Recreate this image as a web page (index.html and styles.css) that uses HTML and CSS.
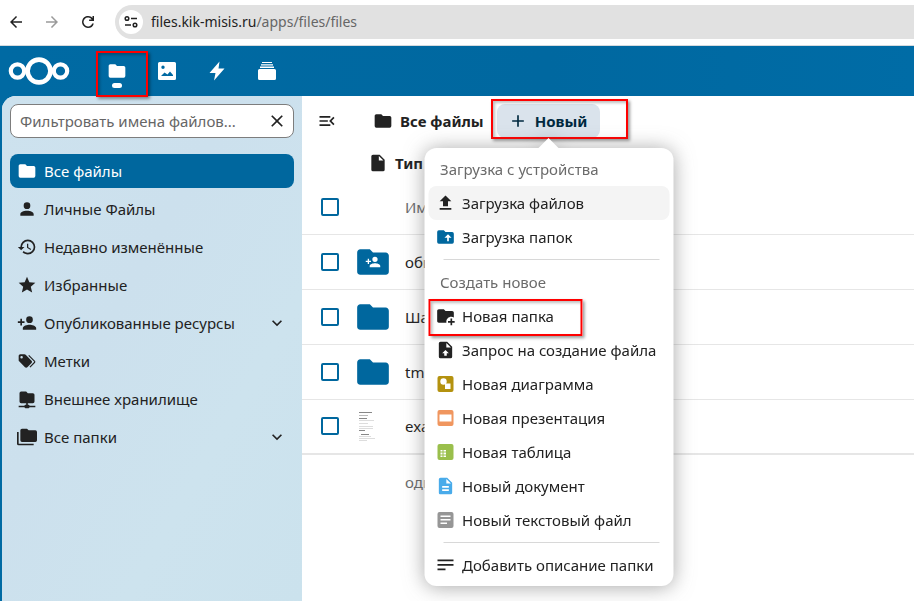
FILE: index.html
```html
<!DOCTYPE html>
<html lang="ru">
<head>
<meta charset="utf-8">
<title>Все файлы</title>
<link rel="stylesheet" href="styles.css">
</head>
<body>
<svg class="sprite" aria-hidden="true">
  <symbol id="folder" viewBox="0 0 24 24"><path d="M10,4H4C2.89,4 2,4.89 2,6V18A2,2 0 0,0 4,20H20A2,2 0 0,0 22,18V8C22,6.89 21.1,6 20,6H12L10,4Z"/></symbol>
  <symbol id="account-plus" viewBox="0 0 24 24"><path d="M15,14C12.33,14 7,15.33 7,18V20H23V18C23,15.33 17.67,14 15,14M6,10V7H4V10H1V12H4V15H6V12H9V10M15,12A4,4 0 0,0 19,8A4,4 0 0,0 15,4A4,4 0 0,0 11,8A4,4 0 0,0 15,12Z"/></symbol>
  <symbol id="chevron" viewBox="0 0 24 24"><path d="M7.41,8.58L12,13.17L16.59,8.58L18,10L12,16L6,10L7.41,8.58Z"/></symbol>
</svg>

<div class="browser">
  <button class="nav-btn" aria-label="Назад"><svg viewBox="0 0 24 24"><path d="M20,11H7.8L13.4,5.4L12,4L4,12L12,20L13.4,18.6L7.8,13H20V11Z"/></svg></button>
  <button class="nav-btn muted" aria-label="Вперёд"><svg viewBox="0 0 24 24"><path d="M4,11H16.2L10.6,5.4L12,4L20,12L12,20L10.6,18.6L16.2,13H4V11Z"/></svg></button>
  <button class="nav-btn" aria-label="Обновить"><svg viewBox="0 0 24 24"><path d="M12,20A8,8 0 1,1 17.7,6.35L18,6.65V4H20V10.5H13.5V8.5H16.9A6,6 0 1,0 17.65,14H19.75A8,8 0 0,1 12,20Z"/></svg></button>
  <div class="address">
    <button class="site-info" aria-label="Сведения о сайте"><svg class="outline" viewBox="0 0 18 18" stroke="currentColor" stroke-width="1.500"><circle cx="5" cy="5.500" r="1.800"/><path d="M9 5.500H15M3 12H9"/><circle cx="13" cy="12" r="1.800"/></svg></button>
    <span class="url">files.kik-misis.ru<span>/apps/files/files</span></span>
  </div>
</div>

<header class="topbar">
  <a class="logo" href="#" aria-label="Главная"><svg class="outline" viewBox="0 0 62 28" stroke="#fff"><circle cx="31" cy="14" r="11.4" stroke-width="4.6"/><circle cx="9.5" cy="14" r="6.7" stroke-width="4.2"/><circle cx="52.5" cy="14" r="6.7" stroke-width="4.2"/></svg></a>
  <nav class="apps">
    <a class="app current" href="#" aria-label="Файлы"><svg viewBox="0 0 24 24"><use href="#folder"/></svg><i class="mark mark-app"></i></a>
    <a class="app" href="#" aria-label="Фото"><svg viewBox="0 0 20 20"><path fill-rule="evenodd" d="M2.5 1H17.5Q19 1 19 2.500V17.500Q19 19 17.500 19H2.500Q1 19 1 17.500V2.500Q1 1 2.500 1ZM6 4.500A1.700 1.700 0 1 0 6 7.900A1.700 1.700 0 1 0 6 4.500ZM4 15H16V14L13 10.500L10.500 13.500L7.500 11.500Z"/></svg></a>
    <a class="app" href="#" aria-label="События"><svg viewBox="0 0 20 20"><path d="M12.500 0.500L2.500 12H8.500L7 19.500L17.500 7.500H11.500Z"/></svg></a>
    <a class="app" href="#" aria-label="Карточки"><svg viewBox="0 0 20 20"><path d="M5 1H15V2H5ZM4 3.200H16V4.400H4ZM3 5.600H17V7H3ZM2.500 8H17.500Q19 8 19 9.500V17.500Q19 19 17.500 19H2.500Q1 19 1 17.500V9.500Q1 8 2.500 8Z"/></svg></a>
  </nav>
</header>

<div class="content">
  <aside class="sidebar">
    <div class="search">
      <input type="text" aria-label="Фильтр" placeholder="Фильтровать имена файлов...">
      <button aria-label="Очистить"><svg viewBox="0 0 24 24"><path d="M19,6.41L17.59,5L12,10.59L6.41,5L5,6.41L10.59,12L5,17.59L6.41,19L12,13.41L17.59,19L19,17.59L13.41,12L19,6.41Z"/></svg></button>
    </div>
    <nav class="views">
      <a class="view active" href="#"><svg viewBox="0 0 24 24"><use href="#folder"/></svg><span>Все файлы</span></a>
      <a class="view" href="#"><svg viewBox="0 0 24 24"><path d="M12,4A4,4 0 0,1 16,8A4,4 0 0,1 12,12A4,4 0 0,1 8,8A4,4 0 0,1 12,4M12,14C16.42,14 20,15.79 20,18V20H4V18C4,15.79 7.58,14 12,14Z"/></svg><span>Личные Файлы</span></a>
      <a class="view" href="#"><svg viewBox="0 0 24 24"><path d="M13.5,8H12V13L16.28,15.54L17,14.33L13.5,12.25V8M13,3A9,9 0 0,0 4,12H1L4.96,16.03L9,12H6A7,7 0 0,1 13,5A7,7 0 0,1 20,12A7,7 0 0,1 13,19C11.07,19 9.32,18.21 8.06,16.94L6.64,18.36C8.27,20 10.5,21 13,21A9,9 0 0,0 22,12A9,9 0 0,0 13,3"/></svg><span>Недавно изменённые</span></a>
      <a class="view" href="#"><svg viewBox="0 0 24 24"><path d="M12,17.27L18.18,21L16.54,13.97L22,9.24L14.81,8.62L12,2L9.19,8.62L2,9.24L7.45,13.97L5.82,21L12,17.27Z"/></svg><span>Избранные</span></a>
      <a class="view" href="#"><svg viewBox="0 0 24 24"><use href="#account-plus"/></svg><span>Опубликованные ресурсы</span><svg viewBox="0 0 24 24"><use href="#chevron"/></svg></a>
      <a class="view" href="#"><svg viewBox="0 0 24 24"><path d="M5.5,9A1.5,1.5 0 0,0 7,7.5A1.5,1.5 0 0,0 5.5,6A1.5,1.5 0 0,0 4,7.5A1.5,1.5 0 0,0 5.5,9M17.41,11.58C17.77,11.94 18,12.44 18,13C18,13.55 17.78,14.05 17.41,14.41L12.41,19.41C12.05,19.77 11.55,20 11,20C10.45,20 9.95,19.78 9.58,19.41L2.59,12.42C2.22,12.05 2,11.55 2,11V6C2,4.89 2.89,4 4,4H9C9.55,4 10.05,4.22 10.41,4.58L17.41,11.58M13.54,5.71L14.54,4.71L21.41,11.58C21.78,11.94 22,12.45 22,13C22,13.55 21.78,14.05 21.42,14.41L16.04,19.79L15.04,18.79L20.75,13L13.54,5.71Z"/></svg><span>Метки</span></a>
      <a class="view" href="#"><svg viewBox="0 0 24 24"><path d="M3,15V5A2,2 0 0,1 5,3H11L13,5H19A2,2 0 0,1 21,7V15A2,2 0 0,1 19,17H13V19H14A1,1 0 0,1 15,20H22V22H15A1,1 0 0,1 14,23H10A1,1 0 0,1 9,22H2V20H9A1,1 0 0,1 10,19H11V17H5A2,2 0 0,1 3,15Z"/></svg><span>Внешнее хранилище</span></a>
      <a class="view" href="#"><svg viewBox="0 0 24 24"><path d="M22,4H14L12,2H6A2,2 0 0,0 4,4V16A2,2 0 0,0 6,18H22A2,2 0 0,0 24,16V6A2,2 0 0,0 22,4M2,6H0V11H0V20A2,2 0 0,0 2,22H20V20H2V6Z"/></svg><span>Все папки</span><svg viewBox="0 0 24 24"><use href="#chevron"/></svg></a>
    </nav>
  </aside>

  <main class="main">
    <div class="toolbar">
      <button class="toggle" aria-label="Закрыть навигацию"><svg viewBox="0 0 24 24"><path d="M21,15.61L19.59,17L14.58,12L19.59,7L21,8.39L17.44,12L21,15.61M3,6H16V8H3V6M3,13V11H13V13H3M3,18V16H16V18H3Z"/></svg></button>
      <a class="crumb" href="#"><svg viewBox="0 0 24 24"><use href="#folder"/></svg>Все файлы</a>
      <div class="new">
        <button class="new-btn"><svg viewBox="0 0 24 24"><path d="M19,13H13V19H11V13H5V11H11V5H13V11H19V13Z"/></svg>Новый</button>
        <i class="mark mark-new"></i>
        <div class="menu">
          <h2>Загрузка с устройства</h2>
          <button class="item hover"><svg viewBox="0 0 24 24"><path d="M9,16V10H5L12,3L19,10H15V16H9M5,20V18H19V20H5Z"/></svg>Загрузка файлов</button>
          <button class="item"><svg class="blue" viewBox="0 0 24 24"><path d="M20,6A2,2 0 0,1 22,8V18A2,2 0 0,1 20,20H4A2,2 0 0,1 2,18V6A2,2 0 0,1 4,4H10L12,6H20M10.75,13H14V17H16V13H19.25L15,8.75"/></svg>Загрузка папок</button>
          <hr>
          <h2>Создать новое</h2>
          <button class="item"><svg viewBox="0 0 24 24"><path d="M13 19C13 19.34 13.04 19.67 13.09 20H4C2.9 20 2 19.11 2 18V6C2 4.89 2.89 4 4 4H10L12 6H20C21.1 6 22 6.89 22 8V13.81C21.12 13.3 20.1 13 19 13C15.69 13 13 15.69 13 19M20 18V15H18V18H15V20H18V23H20V20H23V18H20Z"/></svg>Новая папка<i class="mark mark-item"></i></button>
          <button class="item"><svg viewBox="0 0 24 24"><path fill-rule="evenodd" d="M14,2H6C4.89,2 4,2.89 4,4V20A2,2 0 0,0 6,22H18A2,2 0 0,0 20,20V8L14,2M13,9V3.5L18.5,9H13M12,12L16,16H13.500V19H10.500V16H8L12,12Z"/></svg>Запрос на создание файла</button>
          <button class="item"><svg viewBox="0 0 20 20"><rect x="2" y="2" width="16" height="16" rx="2" fill="#b4920f"/><circle cx="8" cy="7.500" r="3.200" fill="#fff"/><rect x="9.500" y="9.500" width="5.500" height="5.500" fill="#fff"/></svg>Новая диаграмма</button>
          <button class="item"><svg viewBox="0 0 20 20"><rect x="2" y="2" width="16" height="16" rx="2" fill="#f0965f"/><rect x="4" y="6.500" width="12" height="7" fill="#fff"/></svg>Новая презентация</button>
          <button class="item"><svg viewBox="0 0 20 20"><rect x="2" y="2" width="16" height="16" rx="2" fill="#9abf4c"/><path fill="#fff" d="M5 8H7V9.500H5ZM8 8H10.500V9.500H8ZM5 10.500H7V12.500H5ZM8 10.500H10.500V12.500H8ZM5 13.500H7V15H5ZM8 13.500H10.500V15H8Z"/></svg>Новая таблица</button>
          <button class="item"><svg viewBox="0 0 24 24"><path fill="#49abea" d="M13,9H18.5L13,3.5V9M6,2H14L20,8V20A2,2 0 0,1 18,22H6C4.89,22 4,21.1 4,20V4C4,2.89 4.89,2 6,2M16,18V16H8V18H16M16,14V12H8V14H16Z"/></svg>Новый документ</button>
          <button class="item"><svg viewBox="0 0 20 20"><rect x="2" y="2" width="16" height="16" rx="2" fill="#969696"/><path fill="#fff" d="M5 5.500H15V7H5ZM5 9H15V10.500H5ZM5 12.500H11.500V14H5Z"/></svg>Новый текстовый файл</button>
          <hr>
          <button class="item"><svg viewBox="0 0 20 20"><path d="M2 4.500H18V6.200H2ZM2 9H18V10.700H2ZM2 13.500H10V15.200H2Z"/></svg>Добавить описание папки</button>
        </div>
      </div>
    </div>
    <button class="filter"><svg viewBox="0 0 24 24"><path fill-rule="evenodd" d="M13,9V3.5L18.5,9M6,2C4.89,2 4,2.89 4,4V20A2,2 0 0,0 6,22H18A2,2 0 0,0 20,20V8L14,2H6Z"/></svg>Тип</button>
    <table class="files">
      <thead>
        <tr><th class="check"><input type="checkbox" aria-label="Выбрать все"></th><th class="pic"></th><th>Имя</th></tr>
      </thead>
      <tbody>
        <tr><td class="check"><input type="checkbox" aria-label="Выбрать общая"></td><td class="pic"><svg class="blue" viewBox="0 0 24 24"><use href="#folder"/><use class="on-folder" href="#account-plus" x="7" y="7" width="10" height="10"/></svg></td><td>общая</td></tr>
        <tr><td class="check"><input type="checkbox" aria-label="Выбрать Шаблоны"></td><td class="pic"><svg class="blue" viewBox="0 0 24 24"><use href="#folder"/></svg></td><td>Шаблоны</td></tr>
        <tr><td class="check"><input type="checkbox" aria-label="Выбрать tmp"></td><td class="pic"><svg class="blue" viewBox="0 0 24 24"><use href="#folder"/></svg></td><td>tmp</td></tr>
        <tr><td class="check"><input type="checkbox" aria-label="Выбрать example"></td><td class="pic"><svg class="outline" viewBox="0 0 38 38"><path stroke="#888" d="M5 5.500H18M5 11.500H13M5 23.500H11M7 27.500H15"/><path stroke="#bbb" d="M5 8.500H14"/><path stroke="#ddd" d="M5 13.500H20M5 16.500H14M5 19.500H19M5 21.500H19M5 29.500H17M5 31.500H21M5 33.500H13"/></svg></td><td>example</td></tr>
      </tbody>
      <tfoot>
        <tr><td class="check"></td><td class="pic"></td><td>один</td></tr>
      </tfoot>
    </table>
  </main>
</div>
</body>
</html>
```
FILE: styles.css
```css
* { box-sizing: border-box; }
html, body { height: 100%; }
body {
  margin: 0;
  display: flex;
  flex-direction: column;
  overflow: hidden;
  background: #006aa3;
  color: #222;
  font: 15px/24px "Noto Sans", sans-serif;
}
button, input { font: inherit; color: inherit; margin: 0; }
button { border: 0; padding: 0; background: none; }
a { color: inherit; text-decoration: none; }
svg { width: 20px; height: 20px; flex: none; fill: currentColor; }
svg.outline { fill: none; }
.sprite { position: absolute; width: 0; height: 0; }
.blue { color: #00679e; }

.browser {
  display: flex;
  align-items: center;
  height: 46px;
  flex: none;
  padding: 0 0 2px 6px;
  gap: 16px;
  background: #fff;
  border-bottom: 1px solid #d5dade;
}
.nav-btn { display: flex; width: 20px; justify-content: center; }
.nav-btn svg { width: 18px; height: 18px; }
.muted { color: #9a9a9a; }
.address {
  flex: 1;
  display: flex;
  align-items: center;
  gap: 8px;
  height: 34px;
  margin-left: 1px;
  padding-left: 4px;
  border-radius: 17px 0 0 17px;
  background: #e1e1e1;
}
.site-info {
  display: flex;
  align-items: center;
  justify-content: center;
  width: 24px;
  height: 24px;
  border-radius: 50%;
  background: #fff;
}
.site-info svg { width: 18px; height: 18px; }
.url { color: #222; font-size: 14px; }
.url span { color: #666; }

.topbar {
  display: flex;
  align-items: center;
  flex: none;
  height: 50px;
  padding-left: 8px;
  background: linear-gradient(90deg, #006aa3, #0068a0 60%, #006ca6);
}
.logo { display: flex; margin-right: 22px; }
.logo svg { width: 62px; height: 28px; }
.apps { display: flex; color: #fff; }
.app {
  position: relative;
  display: flex;
  align-items: center;
  justify-content: center;
  width: 50px;
  height: 50px;
}
.current::after {
  content: "";
  position: absolute;
  left: 20px;
  bottom: 8px;
  width: 10px;
  height: 5px;
  border-radius: 3px;
  background: #fff;
}

.content {
  flex: 1;
  display: flex;
  min-height: 0;
  margin-left: 2px;
  border-radius: 14px 0 0 0;
  overflow: hidden;
  background: #fff;
}
.sidebar {
  width: 300px;
  flex: none;
  padding: 8px;
  background: linear-gradient(120deg, #cde2ee, #cce0ed 40%, #cde3ee 70%, #cbe2ed);
}
.search {
  display: flex;
  align-items: center;
  height: 34px;
  padding: 0 6px 0 9px;
  border: 1px solid #7d7d7d;
  border-radius: 8px;
  background: #fff;
}
.search input {
  flex: 1;
  min-width: 0;
  padding: 0;
  border: 0;
  outline: 0;
  background: none;
}
.search input::placeholder { color: #666; opacity: 1; }
.search button { display: flex; }
.views { display: flex; flex-direction: column; gap: 4px; margin-top: 16px; }
.view {
  display: flex;
  align-items: center;
  gap: 7px;
  height: 34px;
  padding: 0 7px;
  border-radius: 8px;
}
.view span { flex: 1; }
.active { background: #00679e; color: #fff; }

.main { flex: 1; min-width: 0; padding-top: 8px; }
.toolbar { display: flex; align-items: center; height: 34px; padding-left: 8px; }
.toggle { display: flex; width: 34px; justify-content: center; }
.toggle svg { width: 20px; height: 20px; }
.crumb {
  display: flex;
  align-items: center;
  gap: 7px;
  padding: 0 13px 0 29px;
  font-weight: 700;
}
.new { position: relative; }
.new-btn {
  display: flex;
  align-items: center;
  gap: 7px;
  height: 34px;
  padding: 0 13px 0 11px;
  border-radius: 8px;
  background: #dae3ec;
  color: #00293f;
  font-weight: 700;
}
.menu {
  position: absolute;
  z-index: 2;
  top: 44px;
  left: 50%;
  width: 249px;
  padding: 4px;
  transform: translateX(-50%);
  border-radius: 12px;
  background: #fff;
  filter: drop-shadow(0 1px 10px rgba(77, 77, 77, 0.5));
}
.menu::before {
  content: "";
  position: absolute;
  left: 50%;
  bottom: 100%;
  margin-left: -10px;
  border: 10px solid transparent;
  border-top: 0;
  border-bottom-color: #fff;
}
.menu h2 {
  margin: 0;
  padding: 0 12px;
  font-size: 15px;
  font-weight: 400;
  line-height: 34px;
  color: #6b6b6b;
}
.menu hr {
  height: 1px;
  margin: 5px 10px 5px 15px;
  border: 0;
  background: #d8d8d8;
}
.item {
  position: relative;
  display: flex;
  align-items: center;
  gap: 7px;
  width: 100%;
  height: 34px;
  padding: 0 7px;
  border-radius: 8px;
  white-space: nowrap;
}
.hover { background: #f4f4f4; }

.filter {
  display: flex;
  align-items: center;
  gap: 7px;
  height: 34px;
  margin: 8px 0 0 66px;
  font-weight: 700;
}

.files { width: 100%; border-collapse: collapse; }
.files tr { height: 55px; border-bottom: 1px solid #e6e6e6; }
.files thead tr { height: 54px; }
.files th, .files td { padding: 0; text-align: left; font-weight: 400; }
.files th, .files tfoot td { color: #6b6b6b; }
.files tbody tr:last-child { border-bottom: 2px solid #e6e6e6; }
.files tfoot tr { border: 0; }
.files .check { width: 52px; padding-left: 19px; }
.files .pic { width: 51px; }
.files .pic > svg { display: block; width: 38px; height: 38px; }
.on-folder { fill: #fff; }
.check input {
  display: block;
  appearance: none;
  width: 18px;
  height: 18px;
  border: 2px solid #00679e;
  border-radius: 2px;
  background: #fff;
}

.mark {
  position: absolute;
  z-index: 1;
  border: 2px solid #f00;
  box-shadow: 2px 2px 3px rgba(0, 0, 0, 0.4), inset 2px 2px 3px rgba(0, 0, 0, 0.25);
  pointer-events: none;
}
.mark-app { inset: 5px -6px -1px 4px; }
.mark-new { inset: -5px -28px -1px -6px; }
.mark-item { inset: 0 87px -3px 0; }
```
